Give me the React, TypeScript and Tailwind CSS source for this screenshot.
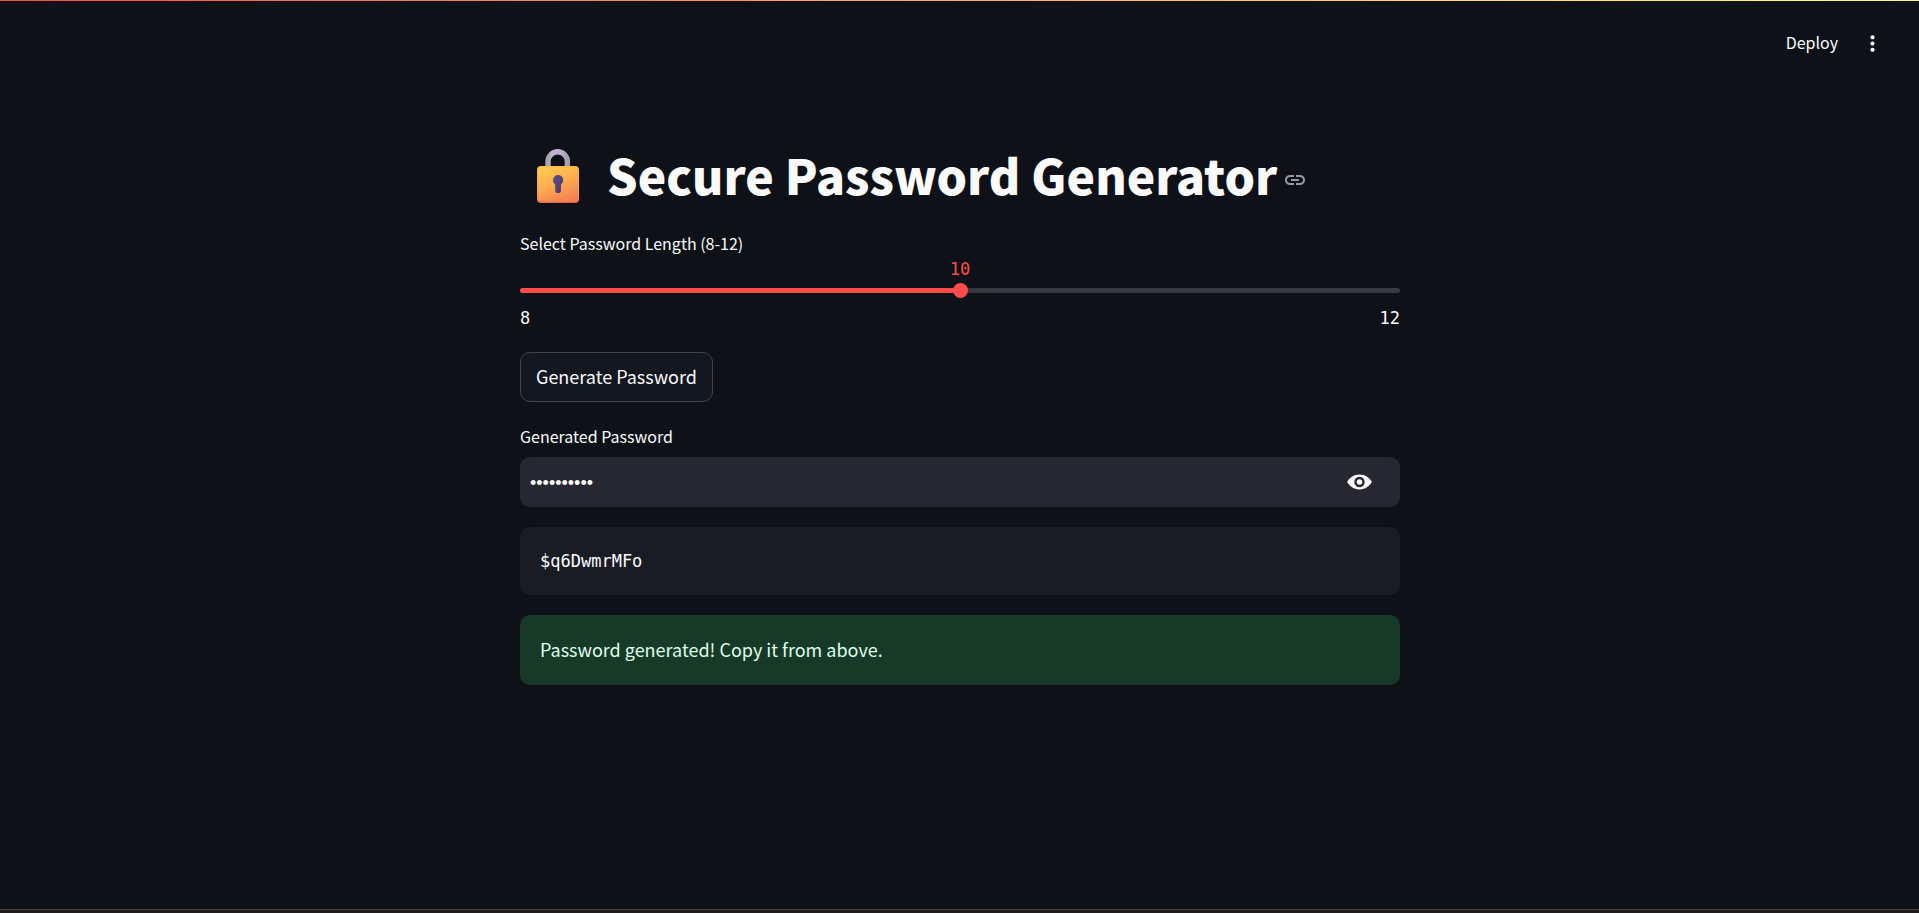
import { useState } from "react";
import { MdLink, MdMoreVert } from "react-icons/md";

const MIN = 8;
const MAX = 12;
const THUMB = 15;

function LockIcon() {
  return (
    <svg viewBox="0 0 42 54" className="h-[54px] w-[42px]" aria-hidden="true">
      <defs>
        <linearGradient id="body" x1="0.3" y1="0" x2="0.7" y2="1">
          <stop offset="0" stopColor="#ffc94f" />
          <stop offset="0.5" stopColor="#fdaa50" />
          <stop offset="1" stopColor="#f47f53" />
        </linearGradient>
        <linearGradient id="edge" x1="0" y1="0" x2="0" y2="1">
          <stop offset="0" stopColor="#f3b944" />
          <stop offset="0.8" stopColor="#f39a50" />
          <stop offset="1" stopColor="#ee6358" />
        </linearGradient>
        <linearGradient id="shackle" x1="0" y1="0" x2="1" y2="0">
          <stop offset="0" stopColor="#a9a4ad" />
          <stop offset="0.25" stopColor="#c3b5d2" />
          <stop offset="0.75" stopColor="#bcaecb" />
          <stop offset="1" stopColor="#a3a0a6" />
        </linearGradient>
        <linearGradient id="hole" x1="0" y1="0" x2="1" y2="1">
          <stop offset="0" stopColor="#5f4c87" />
          <stop offset="1" stopColor="#463a68" />
        </linearGradient>
      </defs>
      <path d="M11 20V12.5a9.7 9.7 0 0 1 19.4 0V20" fill="none" stroke="url(#shackle)" strokeWidth="5.4" />
      <rect x="0" y="17" width="42" height="37" rx="4" fill="url(#edge)" />
      <rect x="1" y="17.5" width="39.5" height="35" rx="3.4" fill="url(#body)" />
      <path
        d="M21 26a5.2 5.2 0 0 1 3 9.4V41.200a2.900 2.900 0 0 1-5.800 0V35.400A5.200 5.200 0 0 1 21 26Z"
        fill="url(#hole)"
      />
    </svg>
  );
}

function EyeIcon() {
  return (
    <svg viewBox="0 0 25 16" className="h-4 w-[25px]" aria-hidden="true">
      <path
        fillRule="evenodd"
        fill="#fafafa"
        d="M12.500 .5C18.400 .5 22.300 3.800 24.600 7.400a1 1 0 0 1 0 1.200C22.300 12.200 18.400 15.500 12.500 15.500S2.700 12.200 .4 8.600a1 1 0 0 1 0-1.200C2.700 3.800 6.600 .5 12.500 .5Zm0 2.300a5.200 5.200 0 1 0 0 10.400a5.200 5.200 0 0 0 0-10.400Zm0 2.400a2.800 2.800 0 1 1 0 5.600a2.800 2.800 0 0 1 0-5.600Z"
      />
    </svg>
  );
}

export default function App() {
  const [length, setLength] = useState(10);
  const [visible, setVisible] = useState(false);
  const ratio = (length - MIN) / (MAX - MIN);
  const stop = `calc(${ratio * 100}% + ${(0.5 - ratio) * THUMB}px)`;

  return (
    <div className="flex min-h-screen flex-col bg-[#0e1117] font-['Noto_Sans_CJK_SC',sans-serif] text-[18px] text-[#fafafa]">
      <div className="h-px bg-linear-to-r from-[#ff4b4b] to-[#fffd80]" />
      <header className="flex h-[84px] items-center justify-end gap-[22px] pr-[34px]">
        <button type="button" className="pb-0.5 text-[16px] leading-6">
          Deploy
        </button>
        <button type="button" aria-label="Main menu">
          <MdMoreVert size={25} />
        </button>
      </header>

      <div className="flex grow flex-col pl-px">
        <main className="mx-auto flex w-full max-w-[880px] grow flex-col pt-[51px]">
          <h1 className="flex h-[76px] items-center text-[48px] font-black leading-[76px]">
            <span className="mt-1 mr-7 ml-[17px]">
              <LockIcon />
            </span>
            Secure Password Generator
            <a href="#secure-password-generator" aria-label="Link to heading" className="mt-3 ml-1.5 text-[#9a9b9d]">
              <MdLink size={24} />
            </a>
          </h1>

          <label htmlFor="length" className="mt-[19px] text-[16px] leading-6">
            Select Password Length (8-12)
          </label>
          <div className="relative pt-7">
            <output
              htmlFor="length"
              className="absolute top-0 -translate-x-1/2 font-['DejaVu_Sans_Mono',monospace] text-[17px] leading-7 text-[#ff4b4b]"
              style={{ left: stop }}
            >
              {length}
            </output>
            <input
              id="length"
              type="range"
              min={MIN}
              max={MAX}
              value={length}
              onChange={(e) => setLength(Number(e.target.value))}
              className="block h-[15px] w-full appearance-none bg-transparent [&::-webkit-slider-runnable-track]:h-[5px] [&::-webkit-slider-runnable-track]:rounded-full [&::-webkit-slider-runnable-track]:bg-[linear-gradient(to_right,#ff4b4b_var(--stop),#373a42_var(--stop))] [&::-webkit-slider-thumb]:-mt-[5px] [&::-webkit-slider-thumb]:size-[15px] [&::-webkit-slider-thumb]:appearance-none [&::-webkit-slider-thumb]:rounded-full [&::-webkit-slider-thumb]:bg-[#ff4b4b]"
              style={{ "--stop": stop } as React.CSSProperties}
            />
          </div>
          <div className="mt-2 flex justify-between font-['DejaVu_Sans_Mono',monospace] text-[17px] leading-6">
            <span>{MIN}</span>
            <span>{MAX}</span>
          </div>

          <button
            type="button"
            className="mt-[22px] h-[50px] self-start rounded-[10px] border border-[#42444c] bg-[#131720] px-[15px] pb-0.5"
          >
            Generate Password
          </button>

          <label htmlFor="password" className="mt-[22px] text-[16px] leading-6">
            Generated Password
          </label>
          <div className="mt-[9px] flex h-[50px] items-center rounded-[10px] bg-[#262730] pr-7 pl-[10px]">
            <input
              id="password"
              type={visible ? "text" : "password"}
              readOnly
              value="$q6DwmrMFo"
              className="min-w-0 grow bg-transparent pt-0.5 font-['Liberation_Sans',sans-serif] text-[18px] outline-none"
            />
            <button type="button" aria-label="Show password text" onClick={() => setVisible(!visible)}>
              <EyeIcon />
            </button>
          </div>

          <pre className="mt-5 flex h-[68px] items-center rounded-[10px] bg-[#1a1c24] px-5 font-['DejaVu_Sans_Mono',monospace] text-[17px] leading-7">
            <code className="font-[inherit]">$q6DwmrMFo</code>
          </pre>

          <div
            role="alert"
            className="mt-5 flex h-[70px] items-center rounded-[10px] bg-[#173928] px-5 pb-0.5 text-[#dffde9]"
          >
            Password generated! Copy it from above.
          </div>
        </main>
      </div>

      <footer className="h-1 border-t border-[#444444] bg-[#201c1d]" />
    </div>
  );
}
